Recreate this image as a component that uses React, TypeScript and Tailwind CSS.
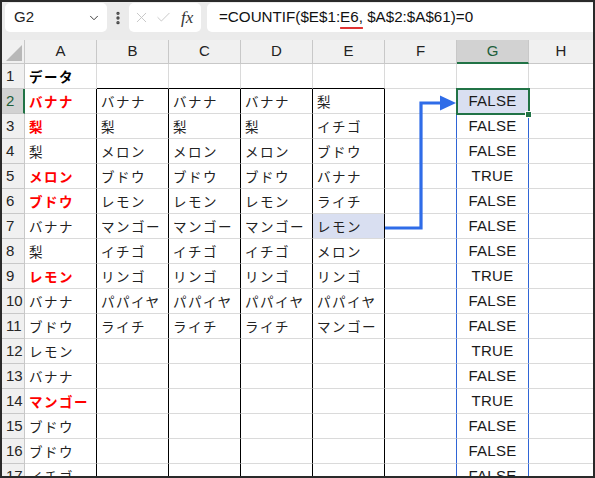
import React from 'react';
import { ChevronDown, X, Check, EllipsisVertical } from 'lucide-react';

// column widths follow the sheet: row header 23px, A..G 72px, H fills the rest
const cols = ['A', 'B', 'C', 'D', 'E', 'F', 'G', 'H'];

const listBCD = ['バナナ', '梨', 'メロン', 'ブドウ', 'レモン', 'マンゴー', 'イチゴ', 'リンゴ', 'パパイヤ', 'ライチ'];
const listE = ['梨', 'イチゴ', 'ブドウ', 'バナナ', 'ライチ', 'レモン', 'メロン', 'リンゴ', 'パパイヤ', 'マンゴー'];

const colA: { text: string; hit?: boolean; head?: boolean }[] = [
    { text: 'データ', head: true },
    { text: 'バナナ', hit: true },
    { text: '梨', hit: true },
    { text: '梨' },
    { text: 'メロン', hit: true },
    { text: 'ブドウ', hit: true },
    { text: 'バナナ' },
    { text: '梨' },
    { text: 'レモン', hit: true },
    { text: 'バナナ' },
    { text: 'ブドウ' },
    { text: 'レモン' },
    { text: 'バナナ' },
    { text: 'マンゴー', hit: true },
    { text: 'ブドウ' },
    { text: 'ブドウ' },
    { text: 'イチゴ' },
];

const colG = [
    'FALSE', 'FALSE', 'FALSE', 'TRUE', 'FALSE', 'FALSE', 'FALSE', 'TRUE',
    'FALSE', 'FALSE', 'TRUE', 'FALSE', 'TRUE', 'FALSE', 'FALSE', 'FALSE',
];

const jp = { fontFamily: '"Noto Sans CJK JP", "Noto Sans", sans-serif' };
const latin = { fontFamily: '"Liberation Sans", Arial, sans-serif' };

const Toolbar: React.FC = () => (
    <div className="h-[38px] bg-[#ebebeb] flex items-start pt-[1px]" style={latin}>
        <div className="ml-[3px] w-[102px] h-[29px] bg-white rounded-[5px] flex items-center justify-between pl-[9px] pr-[6px]">
            <span className="text-[15px] text-[#222]">G2</span>
            <ChevronDown size={14} strokeWidth={1.6} className="text-[#333]" />
        </div>
        <div className="w-[22px] h-[29px] flex items-center justify-center">
            <EllipsisVertical size={16} strokeWidth={3} className="text-[#444]" />
        </div>
        <div className="w-[72px] h-[29px] bg-white rounded-[5px] flex items-center pl-[4px]">
            <X size={17} strokeWidth={1.3} className="text-[#c4c4c4]" />
            <Check size={17} strokeWidth={1.3} className="text-[#c4c4c4] ml-[5px]" />
            <span
                className="ml-[9px] text-[17px] italic text-[#333]"
                style={{ fontFamily: '"Liberation Serif", "Times New Roman", serif' }}
            >
                fx
            </span>
        </div>
        <div className="ml-[6px] flex-1 h-[29px] bg-white rounded-l-[5px] flex items-center pl-[12px]">
            <span className="text-[15.2px] text-[#111] whitespace-nowrap">
                =COUNTIF($E$1:
                <span className="underline decoration-[#e03333] decoration-2 underline-offset-[5px]">E6,</span>
                {' '}$A$2:$A$61)=0
            </span>
        </div>
    </div>
);

const HeaderRow: React.FC = () => (
    <div className="flex h-[24px] bg-[#f0f0f0]" style={latin}>
        <div className="w-[23px] shrink-0 border-r border-b border-[#c8c8c8] flex items-end justify-end p-[2px]">
            <svg width="16" height="16" viewBox="0 0 16 16">
                <polygon points="16,0 16,16 0,16" fill="#b8b8b8" />
            </svg>
        </div>
        {cols.map((c) => (
            <div
                key={c}
                className={
                    c === 'G'
                        ? 'w-[72px] shrink-0 bg-[#d2d2d2] border-r border-[#c8c8c8] border-b-2 border-b-[#217346] flex items-center justify-center text-[15px] text-[#1d5e3a]'
                        : c === 'H'
                          ? 'flex-1 border-b border-[#c8c8c8] flex items-center justify-center text-[15px] text-[#222]'
                          : 'w-[72px] shrink-0 border-r border-b border-[#c8c8c8] flex items-center justify-center text-[15px] text-[#222]'
                }
            >
                {c}
            </div>
        ))}
    </div>
);

const Row: React.FC<{ r: number }> = ({ r }) => {
    const a = colA[r - 1];
    const inBlock = r >= 2 && r <= 11;
    const bcd = inBlock ? listBCD[r - 2] : '';
    const e = inBlock ? listE[r - 2] : '';
    const g = r >= 2 ? colG[r - 2] : '';
    const body = r >= 2;

    const grayCell = 'w-[72px] shrink-0 border-r border-b border-[#dadada] flex items-center pl-[4px]';
    const blockCell = body
        ? 'w-[72px] shrink-0 border-r border-r-black border-b border-b-[#dadada] flex items-center pl-[4px]'
        : 'w-[72px] shrink-0 border-r border-r-[#dadada] border-b border-b-black flex items-center pl-[4px]';

    return (
        <div className="flex h-[25px]">
            <div
                className={
                    r === 2
                        ? 'w-[23px] shrink-0 bg-[#d2d2d2] border-b border-[#c8c8c8] border-r-2 border-r-[#217346] flex items-center pl-[4px] text-[15px] text-[#1d5e3a]'
                        : 'w-[23px] shrink-0 bg-[#f0f0f0] border-r border-b border-[#c8c8c8] flex items-center pl-[4px] text-[15px] text-[#262626]'
                }
                style={latin}
            >
                {r}
            </div>

            {/* A */}
            <div
                className={
                    body
                        ? 'w-[72px] shrink-0 border-r border-r-black border-b border-b-[#dadada] flex items-center pl-[4px]'
                        : grayCell
                }
            >
                <span
                    className={
                        a.hit
                            ? 'text-[13.5px] font-bold tracking-[1.5px] text-[#ff0000]'
                            : a.head
                              ? 'text-[13.5px] font-bold tracking-[1.5px] text-black'
                              : 'text-[13.5px] tracking-[1.5px] text-[#222]'
                    }
                    style={jp}
                >
                    {a.text}
                </span>
            </div>

            {/* B, C, D */}
            {[0, 1, 2].map((k) => (
                <div key={k} className={blockCell}>
                    <span className="text-[13.5px] tracking-[1.5px] text-[#222]" style={jp}>
                        {bcd}
                    </span>
                </div>
            ))}

            {/* E */}
            <div className={r === 7 ? blockCell + ' bg-[#d9dff1]' : blockCell}>
                <span className="text-[13.5px] tracking-[1.5px] text-[#222]" style={jp}>
                    {e}
                </span>
            </div>

            {/* F */}
            <div
                className={
                    body
                        ? 'w-[72px] shrink-0 border-r border-r-[#2f65d6] border-b border-b-[#dadada]'
                        : 'w-[72px] shrink-0 border-r border-b border-[#dadada]'
                }
            />

            {/* G */}
            <div
                className={
                    r === 2
                        ? 'w-[72px] shrink-0 bg-[#d9dff1] border-r border-r-[#2f65d6] border-b border-b-[#dadada] flex items-center justify-center'
                        : body
                          ? 'w-[72px] shrink-0 border-r border-r-[#2f65d6] border-b border-b-[#dadada] flex items-center justify-center'
                          : 'w-[72px] shrink-0 border-r border-b border-[#dadada]'
                }
            >
                <span className="text-[15px] tracking-[0.3px] text-[#1a1a1a]" style={latin}>
                    {g}
                </span>
            </div>

            {/* H */}
            <div className="flex-1 border-b border-[#dadada]" />
        </div>
    );
};

export default function App() {
    return (
        <div className="relative w-[595px] h-[478px] overflow-hidden border-2 border-[#2a2a2a] bg-white">
            <Toolbar />
            <HeaderRow />
            {Array.from({ length: 17 }, (_, i) => (
                <Row key={i} r={i + 1} />
            ))}

            {/* active cell G2 */}
            <div className="absolute left-[454px] top-[86px] w-[74px] h-[27px] border-2 border-[#217346]" />
            <div className="absolute left-[523px] top-[109px] w-[7px] h-[7px] bg-[#217346] border border-white" />

            {/* arrow from E7 to G2 */}
            <svg className="absolute left-0 top-0 pointer-events-none" width="591" height="474" viewBox="2 2 591 474">
                <polyline
                    points="385,228 421,228 421,103 442,103"
                    fill="none"
                    stroke="#2f6ce8"
                    strokeWidth="3.2"
                    strokeLinejoin="miter"
                />
                <polygon points="440,95.5 456,103 440,110.5" fill="#2f6ce8" />
            </svg>
        </div>
    );
}
